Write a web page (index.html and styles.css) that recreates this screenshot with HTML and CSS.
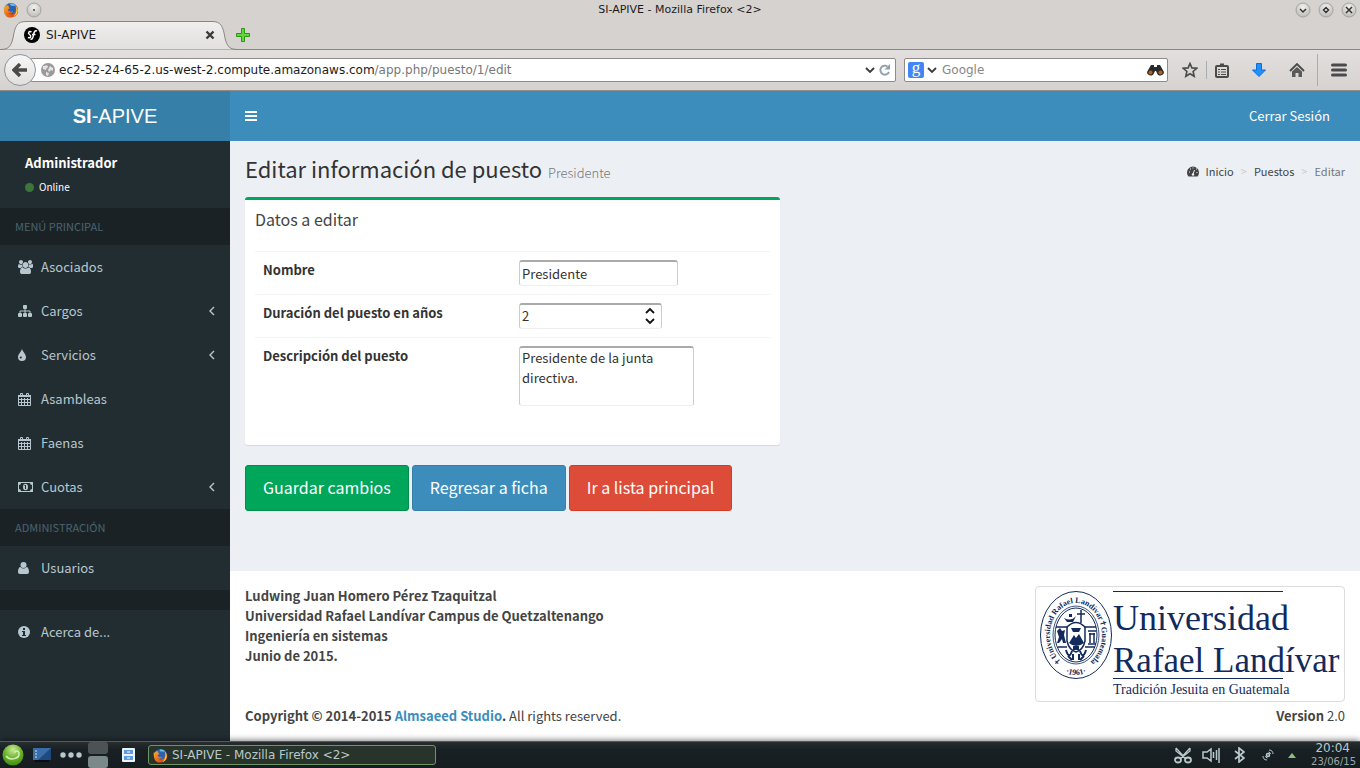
FILE: index.html
```html
<!DOCTYPE html>
<html lang="es">
<head>
<meta charset="utf-8">
<title>SI-APIVE</title>
<link rel="stylesheet" href="styles.css">
</head>
<body>
<svg class="defs" aria-hidden="true">
  <defs>
    <radialGradient id="knob" cx=".5" cy=".3" r=".7"><stop offset="0" stop-color="#f2f1f0"/><stop offset="1" stop-color="#bdbab7"/></radialGradient>
    <linearGradient id="tabfill" x1="0" y1="0" x2="0" y2="1"><stop offset="0" stop-color="#f0efee"/><stop offset="1" stop-color="#e2dfde"/></linearGradient>
    <linearGradient id="flame" x1="0" y1="0" x2="1" y2="1"><stop offset="0" stop-color="#f9b52c"/><stop offset=".5" stop-color="#ee6a18"/><stop offset="1" stop-color="#c8370c"/></linearGradient>
    <radialGradient id="suse" cx=".5" cy=".25" r=".8"><stop offset="0" stop-color="#cbe89a"/><stop offset=".5" stop-color="#6cb52c"/><stop offset="1" stop-color="#3c8312"/></radialGradient>
    <symbol id="firefox" viewBox="0 0 16 16"><circle cx="8" cy="8" r="7" fill="#2a62b0"/><path d="M7 2c2-1 5 0 6 2-3-1-5 1-6-2z" fill="#6fc4ee"/><path d="M1 4c0 1 .5 1.500 1 1 1-2 3-2 4-1-1 1 0 2 1 2-1 1-2 1-2 2 1 2 4 2 5 1 0 2-3 3-5 2 3 3 8 1 8-4 0-2-1-3-1-4 5 4 4 12-4 12.500C2 16 0 10 1 4z" fill="url(#flame)"/><path d="M13 4c3 4 2 9-3 11 3-3 4-6 3-11z" fill="#fbd23c"/></symbol>
    <symbol id="calendar" viewBox="0 0 14 15"><path d="M.500 3.500h12v10h-12zM1 7.500h11M1 10.500h11M3.500 6v7M6.500 6v7M9.500 6v7" fill="none" stroke="currentColor"/><path d="M0 3h13v2H0z" fill="currentColor"/><path d="M2.500 1.500h2v2h-2zM8.500 1.500h2v2h-2z" fill="#222d32" stroke="currentColor"/></symbol>
    <symbol id="angle" viewBox="0 0 6 10"><path d="M5 1 1 5l4 4" fill="none" stroke="currentColor" stroke-width="1.400"/></symbol>
  </defs>
</svg>

<header class="browser">
  <div class="titlebar">
    <div class="title-side"><svg width="16" height="16"><use href="#firefox"/></svg>
      <svg width="16" height="16"><circle cx="8" cy="8" r="7" fill="url(#knob)" stroke="#a5a2a0"/><circle cx="8" cy="8" r="1" fill="#444"/></svg></div>
    <div class="title-text">SI-APIVE - Mozilla Firefox &lt;2&gt;</div>
    <div class="title-side title-end">
      <svg width="16" height="16" fill="none" stroke="#333"><circle cx="8" cy="8" r="7" fill="url(#knob)" stroke="#a5a2a0"/><path d="m5 7 3 3 3-3" stroke-width="1.500"/></svg>
      <svg width="16" height="16" fill="none" stroke="#333"><circle cx="8" cy="8" r="7" fill="url(#knob)" stroke="#a5a2a0"/><path d="m8 5.500 2.500 2.500L8 10.500 5.500 8z" stroke-width="1.500"/></svg>
      <svg width="16" height="16" fill="none" stroke="#333"><circle cx="8" cy="8" r="7" fill="url(#knob)" stroke="#a5a2a0"/><path d="m5 5 6 6m0-6-6 6" stroke-width="1.500"/></svg>
    </div>
  </div>
  <div class="tabs">
    <div class="tab">
      <svg class="tab-shape" viewBox="0 0 238 30"><path d="M0 29.500C8 29.500 11 27 13 18 15 6 17 1.500 26 1.500h186c9 0 11 4.500 13 16.500 2 9 5 11.500 13 11.500" fill="url(#tabfill)" stroke="#8a8683"/></svg>
      <svg class="tab-icon" viewBox="0 0 16 16"><circle cx="8" cy="8" r="8"/><path d="M7.500 5C5 3.500 3.500 6 5.500 7.500s1.500 4-1.500 3M13 4c-2-1-3 1-3.500 4s-1.500 5-3 4M8 7.500h3.500" fill="none" stroke="#fff" stroke-width="1.500"/></svg>
      <span class="tab-name">SI-APIVE</span>
      <button class="plain" aria-label="Cerrar pestaña"><svg width="10" height="10"><path d="m1.500 1.500 7 7m0-7-7 7" stroke="#3a3a3a" stroke-width="2.400"/></svg></button>
    </div>
    <button class="plain newtab" aria-label="Nueva pestaña"><svg width="14" height="14"><path d="M5.500.500h3v5h5v3h-5v5h-3v-5h-5v-3h5z" fill="#5fd63a" stroke="#2a9614"/></svg></button>
  </div>
  <div class="navbar">
    <button class="back" aria-label="Atrás"><svg width="16" height="14"><path d="M8 1 2 7l6 6M2 7h13" fill="none" stroke="#4a4a4a" stroke-width="3.400"/></svg></button>
    <div class="field urlbar">
      <svg width="14" height="14"><circle cx="7" cy="7" r="7" fill="#9a9a9a"/><path d="M2 3c2 0 3-1 5 0 0 2-2 2-2 4L2 6zM9 3l3 2v3l-2-1-2 2-1-2zM5 9l3 1-1 3-2-1z" fill="#e4e4e4"/></svg>
      <div class="url">ec2-52-24-65-2.us-west-2.compute.amazonaws.com<span class="path">/app.php/puesto/1/edit</span></div>
      <svg width="10" height="7"><path d="m1 1 4 4 4-4" fill="none" stroke="#3a3a3a" stroke-width="1.800"/></svg>
      <svg width="12" height="12"><path d="M8.500 2.500A4.500 4.500 0 1 0 10 8" fill="none" stroke="#8fa0ae" stroke-width="1.900"/><path d="M11 0v5.500H5.500z" fill="#8fa0ae"/></svg>
    </div>
    <div class="field search">
      <span class="engine">g</span>
      <svg width="10" height="7"><path d="m1 1 4 4 4-4" fill="none" stroke="#3a3a3a" stroke-width="1.800"/></svg>
      <input class="search-input" type="text" placeholder="Google" aria-label="Buscar">
      <svg width="17" height="12"><path d="M4 1h3v2h3V1h3l4 7c0 4-6 5-7 1L9 7H8L7 9c-1 4-7 3-7-1z" fill="#2b2a2a"/><circle cx="3.500" cy="8.500" r="2" fill="#b5601c"/><circle cx="13.500" cy="8.500" r="2" fill="#b5601c"/></svg>
    </div>
    <div class="tools">
      <button class="plain" aria-label="Marcar"><svg width="16" height="16"><path d="m8 1.500 1.900 4.400 4.800.4-3.600 3.200 1.100 4.800L8 11.800l-4.200 2.500 1.100-4.800-3.600-3.200 4.800-.4z" fill="none" stroke="#4a4a4a" stroke-width="1.600"/></svg></button>
      <i class="rule"></i>
      <button class="plain" aria-label="Marcadores"><svg width="14" height="15" fill="none" stroke="#4a4a4a"><rect x="1" y="3" width="12" height="11" rx="1" stroke-width="2"/><path d="M5 2h4" stroke-width="3"/><path d="M3 6.500h2m1 0h5m-8 2.500h2m1 0h5m-8 2.500h2m1 0h5" stroke-width="1.200"/></svg></button>
      <button class="plain gap" aria-label="Descargas"><svg width="14" height="14"><path d="M4.500.500h5V7h4L7 13.500.500 7h4z" fill="#2090fb" stroke="#0a6fd8"/></svg></button>
      <button class="plain gap" aria-label="Inicio"><svg width="16" height="15"><path d="m1 8 7-7 7 7" fill="none" stroke="#4a4a4a" stroke-width="1.800"/><path d="M3 8.500 8 4l5 4.500V14H9.500v-4h-3v4H3z" fill="#5a5a5a"/></svg></button>
      <i class="rule tall"></i>
      <button class="plain menu" aria-label="Menú"><svg width="16" height="14"><path d="M1.500 2h13M1.500 7h13M1.500 12h13" stroke="#4a4a4a" stroke-width="3" stroke-linecap="round"/></svg></button>
    </div>
  </div>
</header>

<div class="app">
  <header class="topbar">
    <a class="logo" href="#"><b>SI</b>-APIVE</a>
    <button class="plain toggle" aria-label="Alternar menú"><svg width="12" height="10"><path d="M0 1h12M0 5h12M0 9h12" stroke="#fff" stroke-width="2"/></svg></button>
    <a class="logout" href="#">Cerrar Sesión</a>
  </header>
  <div class="middle">
    <aside class="sidebar">
      <div class="user"><p class="user-name">Administrador</p><a class="status" href="#"><i class="dot"></i>Online</a></div>
      <nav class="menu-list">
        <div class="group">MENÚ PRINCIPAL</div>
        <a class="item" href="#"><svg width="15" height="14" viewBox="0 0 1920 1792" fill="currentColor"><path d="M593 896q-162 5-265 128h-134q-82 0-138-40.500t-56-118.500q0-353 124-353 6 0 43.500 21t97.500 42.500 119 21.500q67 0 133-23-5 37-5 66 0 159 97 287zm1071 637q0 120-73 189.500t-194 69.500h-874q-121 0-194-69.500t-73-189.500q0-53 3.500-103.500t14-109 26.500-108.500 43-97.500 62-81 85.500-53.500 111.500-20q10 0 43 21.500t73 48 107 48 135 21.500 135-21.500 107-48 73-48 43-21.500q61 0 111.500 20t85.500 53.500 62 81 43 97.500 26.500 108.500 14 109 3.500 103.500zm-1024-1277q0 106-75 181t-181 75-181-75-75-181 75-181 181-75 181 75 75 181zm704 384q0 159-112.500 271.500t-271.500 112.500-271.500-112.500-112.500-271.500 112.500-271.500 271.500-112.500 271.500 112.500 112.500 271.500zm576 225q0 78-56 118.500t-138 40.500h-134q-103-123-265-128 97-128 97-287 0-29-5-66 66 23 133 23 59 0 119-21.500t97.500-42.500 43.500-21q124 0 124 353zm-128-609q0 106-75 181t-181 75-181-75-75-181 75-181 181-75 181 75 75 181z"/></svg><span>Asociados</span></a>
        <a class="item" href="#"><svg width="14" height="12" fill="currentColor"><rect x="5" width="4" height="4" rx="1"/><rect y="8" width="4" height="4" rx="1"/><rect x="5" y="8" width="4" height="4" rx="1"/><rect x="10" y="8" width="4" height="4" rx="1"/><path d="M7 4v4M2 8V6h10v2" fill="none" stroke="currentColor"/></svg><span>Cargos</span><svg class="arrow"><use href="#angle"/></svg></a>
        <a class="item" href="#"><svg width="8" height="12"><path d="M4 0c.800 3 4 5 4 8a4 4 0 0 1-8 0c0-3 3.200-5 4-8z" fill="currentColor"/><circle cx="2.800" cy="8.500" r="1.100" fill="#222d32"/></svg><span>Servicios</span><svg class="arrow"><use href="#angle"/></svg></a>
        <a class="item" href="#"><svg width="14" height="15"><use href="#calendar"/></svg><span>Asambleas</span></a>
        <a class="item" href="#"><svg width="14" height="15"><use href="#calendar"/></svg><span>Faenas</span></a>
        <a class="item" href="#"><svg width="15" height="10"><path d="M0 0h15v10H0z" fill="currentColor"/><path d="M3 1h9a2 2 0 0 0 2 2v4a2 2 0 0 0-2 2H3a2 2 0 0 0-2-2V3a2 2 0 0 0 2-2z" fill="#222d32"/><ellipse cx="7.500" cy="5" rx="2.500" ry="3.200" fill="currentColor"/><path d="M7.500 3v4M6.500 3.500h1" stroke="#222d32"/></svg><span>Cuotas</span><svg class="arrow"><use href="#angle"/></svg></a>
        <div class="group">ADMINISTRACIÓN</div>
        <a class="item" href="#"><svg width="11" height="12" fill="currentColor"><circle cx="5.500" cy="3" r="3"/><path d="M2.500 5c2 2 4 2 6 0C10 5 11 7 11 10c0 1.300-.8 2-2 2H2c-1.200 0-2-.7-2-2 0-3 1-5 2.500-5z"/></svg><span>Usuarios</span></a>
        <div class="group blank"></div>
        <a class="item" href="#"><svg width="12" height="12"><circle cx="6" cy="6" r="6" fill="currentColor"/><path d="M5 2h2v2H5zM4 5h3v4h1v1H4V9h1V6H4z" fill="#222d32"/></svg><span>Acerca de...</span></a>
      </nav>
    </aside>
    <div class="column">
      <main class="content">
        <div class="heading">
          <h1 class="page-title">Editar información de puesto <small class="subtitle">Presidente</small></h1>
          <nav class="crumbs">
            <a class="crumb" href="#"><svg width="12" height="11"><path d="M1.500 10.500A6 6 0 1 1 10.500 10.500z" fill="#444"/><path d="m6 8 1.500-4" stroke="#ecf0f5"/><circle cx="6" cy="8.500" r="1.200" fill="#ecf0f5"/><path d="M2 6h1m0-3h1m2-1.500v1M9 3h1M9.500 6.500h1" stroke="#ecf0f5"/></svg>Inicio</a>
            <span class="sep">&gt;</span><a class="crumb" href="#">Puestos</a><span class="sep">&gt;</span><span class="here">Editar</span>
          </nav>
        </div>
        <form class="form">
          <section class="box">
            <h3 class="box-title">Datos a editar</h3>
            <div class="box-body">
              <div class="row"><label class="label" for="nombre">Nombre</label><div class="cell"><input class="control name" id="nombre" type="text" value="Presidente"></div></div>
              <div class="row"><label class="label" for="duracion">Duración del puesto en años</label><div class="cell"><div class="control number"><input class="bare" id="duracion" type="number" value="2"><svg width="10" height="20"><path d="m1 7 4-4 4 4M1 13l4 4 4-4" fill="none" stroke="#111" stroke-width="1.800"/></svg></div></div></div>
              <div class="row"><label class="label" for="descripcion">Descripción del puesto</label><div class="cell"><textarea class="control area" id="descripcion">Presidente de la junta directiva.</textarea></div></div>
            </div>
          </section>
          <div class="actions"><button class="btn save" type="button">Guardar cambios</button><button class="btn card" type="button">Regresar a ficha</button><button class="btn list" type="button">Ir a lista principal</button></div>
        </form>
      </main>
      <footer class="footer">
        <div class="credits">
          <p class="authors">Ludwing Juan Homero Pérez Tzaquitzal<br>Universidad Rafael Landívar Campus de Quetzaltenango<br>Ingeniería en sistemas<br>Junio de 2015.</p>
          <p class="copy"><b>Copyright © 2014-2015 <a class="studio" href="#">Almsaeed Studio</a>.</b> All rights reserved.</p>
        </div>
        <div class="brand">
          <div class="thumb">
            <svg class="crest" viewBox="0 0 300 106" role="img" aria-label="Universidad Rafael Landívar">
              <g fill="none" stroke="#122a5c">
                <ellipse cx="36" cy="44" rx="35.500" ry="43.500"/>
                <ellipse cx="36" cy="44" rx="23" ry="29" stroke-width=".8"/><ellipse cx="36" cy="44" rx="21" ry="27"/>
                <path d="M41 19v13M37 23h8" stroke-width="1.500"/>
                <path d="M16 36h12M44 36h12M18 56h9M45 56h10M48 40h8M49 43h6M50 42v10M54 42v10M48 53h8" stroke-width="1.500"/>
                <path d="M27 36q9-9 18 0v14q-2 9-9 11-7-2-9-11z" stroke-width="1.500"/>
                <path d="M26 59q3 10 6 1M46 59q-3 10-6 1M33 63v6M39 63v6M28 65l4 4M44 65l-4 4" stroke-width="2"/>
              </g>
              <g fill="#122a5c"><path d="M24 27q7 4 12-2l-3 6h-6zM29 23h3v3h-3zM29 52l5-8 2 3 3-4 5 9q-8 6-15 0zM31 37h10l-2 4h-6zM33 55h6v4h-6z"/><path d="m17 40 3-3 2 3 3-1-1 5 2 8h-3l-1-4-3 4h-2l2-6z"/><path d="M73 0h170v1H73zM73 87h170v1H73z"/></g>
              <path id="ring" d="M25 73A26 32 0 1 1 47 73" fill="none"/>
              <path id="year" d="M20 79A33 40 0 0 0 52 79" fill="none"/>
              <text class="seal"><textPath href="#ring" startOffset="50%">✝Universidad Rafael Landívar✝Guatemala</textPath></text>
              <text class="seal"><textPath href="#year" startOffset="50%">·1961·</textPath></text>
              <text class="word" x="73" y="39">Universidad</text>
              <text class="word second" x="73" y="81">Rafael Landívar</text>
              <text class="motto" x="73" y="103">Tradición Jesuita en Guatemala</text>
            </svg>
          </div>
          <p class="version"><b>Version</b> 2.0</p>
        </div>
      </footer>
    </div>
  </div>
</div>

<div class="taskbar">
  <svg width="22" height="22"><circle cx="11" cy="11" r="10.500" fill="url(#suse)"/><path d="M4 12c4 5 14 3 13-3-1-3-5-2-4 0" fill="none" stroke="#d8efb8" stroke-width="1.500"/></svg>
  <svg class="desk" width="18" height="14"><path d="M0 0h18v12H0z" fill="#1d4a80"/><path d="M0 0h18L5 12H0z" fill="#3a6ea8"/><path d="M2 3h2M2 6h2M2 9h2" stroke="#cfe4f5"/><path d="M2 12h14v2H2z" fill="#0a0c10"/></svg>
  <svg width="22" height="6" fill="#b8c8cc"><circle cx="3" cy="3" r="2.700"/><circle cx="11" cy="3" r="2.700"/><circle cx="19" cy="3" r="2.700"/></svg>
  <div class="pager"><i class="desktop"></i><i class="desktop active"></i></div>
  <svg class="files" width="13" height="14"><rect width="13" height="14" rx="1" fill="#edf3fa"/><path d="M2 2h9v4H2zM2 8h9v4H2z" fill="#5c9ce6"/><path d="M5 4h3M5 10h3" stroke="#fff"/></svg>
  <button class="task"><svg width="15" height="15"><use href="#firefox"/></svg>SI-APIVE - Mozilla Firefox &lt;2&gt;</button>
  <div class="tray">
    <svg width="18" height="18" fill="none" stroke="#b9c9cb" stroke-width="1.800"><ellipse cx="4" cy="14" rx="3" ry="2.500"/><ellipse cx="14" cy="14" rx="3" ry="2.500"/><path d="M2 2v3l10 8M16 2v3L6 13M2 2l10 11M16 2 6 13" stroke-width="1.300"/></svg>
    <svg class="volume" width="18" height="16" fill="none" stroke="#b9c9cb" stroke-width="1.500"><path d="M1 5h4l4-3v12l-4-3H1zM11.500 5v6M14.500 3v10M17 1v15"/></svg>
    <svg width="11" height="16"><path d="m1 4 9 7-5 4V1l5 4-9 7" fill="none" stroke="#b9c9cb" stroke-width="1.700"/></svg>
    <svg class="updates" width="12" height="12" fill="none" stroke="#b9c9cb"><circle cx="6" cy="6" r="1.500" stroke-width="1.500"/><path d="M7 1c3 0 4 2 4 4M5 11c-3 0-4-2-4-4M3.500 7q0 1.500 2 2M8.500 5q0-1.500-2-2"/></svg>
    <svg width="8" height="5"><path d="M0 5 4 0l4 5z" fill="#8fbf7c"/></svg>
  </div>
  <div class="clock"><span>20:04</span><span class="date">23/06/15</span></div>
</div>
</body>
</html>
```
FILE: styles.css
```css
* { box-sizing: border-box; }
body { margin: 0; min-height: 100vh; display: flex; flex-direction: column; font: 13px/20px "Noto Sans CJK JP", "Noto Sans", sans-serif; color: #333; }
p, h1, h3 { margin: 0; }
a { color: inherit; text-decoration: none; }
svg { display: block; flex: none; }
.defs { position: absolute; width: 0; height: 0; }
.plain { padding: 0; border: 0; background: none; }

/* Browser window */
.browser { background: #d6d2d0; font-family: "DejaVu Sans", sans-serif; color: #1c1c1c; }
.titlebar { display: flex; align-items: center; height: 20px; padding: 0 3px; font-size: 11px; }
.title-side { flex: 1; display: flex; gap: 7px; }
.title-end { justify-content: flex-end; }
.tabs { display: flex; align-items: center; height: 30px; border-bottom: 1px solid #8a8683; }
.tab { position: relative; display: flex; align-items: center; width: 238px; height: 30px; padding: 0 23px 0 24px; font-size: 12px; }
.tab-shape { position: absolute; left: 0; top: 0; width: 238px; height: 30px; }
.tab-icon, .tab-name, .tab button { position: relative; }
.tab-icon { width: 16px; height: 16px; }
.tab-name { flex: 1; padding-left: 6px; }
.newtab { margin-left: -2px; }
.navbar { display: flex; align-items: center; height: 41px; padding: 0 13px 0 4px; background: linear-gradient(#e2dfde, #d6d2d0); border-bottom: 1px solid #8f8b88; }
.back { position: relative; display: flex; align-items: center; justify-content: center; width: 32px; height: 32px; padding: 0; border: 1px solid #8b959d; border-radius: 50%; background: linear-gradient(#f8f7f7, #e1dfde); }
.field { display: flex; align-items: center; height: 24px; border: 1px solid #8f8b88; border-radius: 2px; background: #fff; font-size: 12px; }
.urlbar { flex: 1; min-width: 0; margin-left: -6px; padding: 0 4px 0 10px; gap: 4px; }
.url { flex: 1; min-width: 0; overflow: hidden; white-space: nowrap; }
.path { color: #777; }
.search { width: 264px; margin-left: 8px; padding: 0 3px; gap: 3px; }
.engine { width: 16px; height: 16px; border-radius: 2px; background: #4285f4; color: #fff; font: 17px/12px "Liberation Serif", serif; text-align: center; }
.search-input { flex: 1; min-width: 0; padding: 0 0 0 2px; border: 0; outline: 0; background: none; font: inherit; }
.search-input::placeholder { color: #888; }
.tools { display: flex; align-items: center; padding-left: 14px; }
.rule { width: 1px; height: 18px; margin: 0 8px; background: #a9adb1; }
.tall { height: 32px; margin: 0 13px 0 12px; }
.gap { margin-left: 23px; }

/* Application */
.app { flex: 1; display: flex; flex-direction: column; }
.topbar { display: flex; align-items: center; height: 50px; background: #3c8dbc; color: #fff; }
.logo { width: 230px; background: #367fa9; font: 20px/50px "Liberation Sans", sans-serif; text-align: center; }
.toggle { padding: 15px; }
.logout { margin-left: auto; padding: 0 30px; }
.middle { flex: 1; display: flex; }
.sidebar { width: 230px; background: #222d32; color: #b8c7ce; }
.user { height: 67px; padding: 12px 25px; color: #fff; }
.user-name { font-weight: 600; }
.status { display: flex; align-items: center; gap: 5px; padding-top: 4px; font-size: 10px; }
.dot { width: 9px; height: 9px; border-radius: 50%; background: #3c763d; }
.group { height: 37px; padding-left: 15px; background: #1a2226; color: #4b646f; font-size: 11px; line-height: 37px; }
.blank { height: 20px; }
.item { display: grid; grid-template-columns: 23px 1fr 6px; align-items: center; height: 44px; padding: 0 15px 0 18px; }
.arrow { width: 6px; height: 10px; }
.column { flex: 1; min-width: 0; display: flex; flex-direction: column; }
.content { flex: 1; padding: 15px; background: #ecf0f5; }
.heading { display: flex; justify-content: space-between; align-items: flex-start; height: 30px; }
.page-title { font-size: 22px; line-height: 24px; font-weight: 400; }
.subtitle { padding-left: 1px; color: #777; font-size: 13px; line-height: 13px; font-weight: 300; }
.crumbs { display: flex; align-items: center; align-self: center; font-size: 11px; color: #444; }
.crumb { display: flex; align-items: center; gap: 7px; }
.sep { padding: 0 7px; color: #ccc; }
.here { color: #777; }
.form { padding-top: 11px; }
.box { width: calc(50% - 15px); border-top: 3px solid #00a65a; border-radius: 3px; background: #fff; box-shadow: 0 1px 1px rgba(0, 0, 0, .1); }
.box-title { padding: 9px 10px 11px; color: #444; font-size: 16px; font-weight: 400; }
.box-body { padding: 11px 10px 31px; }
.row { display: grid; grid-template-columns: 256px 1fr; border-top: 1px solid #f4f4f4; }
.label { padding: 8px; font-weight: 700; }
.cell { padding: 8px; }
.control { display: block; height: 26px; padding: 0 2px 1px; border: 1px solid #ccc; border-top: 2px solid #aaa; border-bottom-color: #eee; border-radius: 3px; background: #fff; color: #333; font: inherit; }
.name { width: 159px; }
.number { display: flex; align-items: center; width: 143px; padding-right: 6px; }
.bare { flex: 1; min-width: 0; padding: 0; border: 0; outline: 0; background: none; color: inherit; font: inherit; appearance: textfield; }
.bare::-webkit-inner-spin-button { appearance: none; margin: 0; }
.area { width: 175px; height: 60px; resize: none; overflow: hidden; }
.actions { display: flex; gap: 3px; padding-top: 20px; }
.btn { height: 46px; padding: 0 17px 2px; border: 1px solid; border-radius: 3px; color: #fff; font: 16px/24px "Noto Sans CJK JP", "Noto Sans", sans-serif; }
.save { background: #00a65a; border-color: #008d4c; }
.card { background: #3c8dbc; border-color: #367fa9; }
.list { background: #dd4b39; border-color: #d73925; }
.footer { display: flex; justify-content: space-between; padding: 15px; background: #fff; color: #444; }
.credits, .brand { display: flex; flex-direction: column; justify-content: space-between; }
.authors { font-weight: 700; }
.studio { color: #3c8dbc; }
.brand { height: 140px; }
.thumb { padding: 4px; border: 1px solid #ddd; border-radius: 4px; }
.crest { width: 300px; height: 106px; }
.word { fill: #122a5c; font: 36px "Liberation Serif", serif; }
.second { font-size: 35px; }
.motto { fill: #122a5c; font: 14px "Liberation Serif", serif; }
.seal { fill: #122a5c; font: bold 8px "Liberation Serif", "DejaVu Sans", serif; text-anchor: middle; }
.version { text-align: right; }

/* Desktop panel */
.taskbar { position: relative; display: flex; align-items: center; height: 27px; padding: 0 4px 0 2px; background: linear-gradient(#272d2f, #182024 30%, #151d1f); border-top: 1px solid #555b5c; box-shadow: 0 -1px 6px rgba(0, 0, 0, .5); color: #b9c9cb; font-family: "DejaVu Sans", sans-serif; }
.desk { margin: 0 9px; }
.pager { display: flex; flex-direction: column; gap: 2px; width: 20px; height: 26px; margin: 0 14px 0 6px; }
.desktop { flex: 1; border-radius: 3px; background: #4d5354; }
.active { background: #7b898a; }
.task { display: flex; align-items: center; gap: 4px; width: 288px; height: 20px; margin-left: 13px; padding: 0 4px; border: 1px solid #6d9467; border-radius: 3px; background: #283329; color: #b9c9cb; font: 12px "DejaVu Sans", sans-serif; }
.tray { display: flex; align-items: center; gap: 10px; margin-left: auto; }
.volume { margin-right: 4px; }
.updates { margin: 0 4px 0 7px; }
.clock { width: 60px; display: flex; flex-direction: column; align-items: flex-end; font-size: 12px; line-height: 13px; }
.clock span { padding-right: 6px; }
.clock .date { padding: 0; font-size: 10px; color: #9aa8aa; }
```
